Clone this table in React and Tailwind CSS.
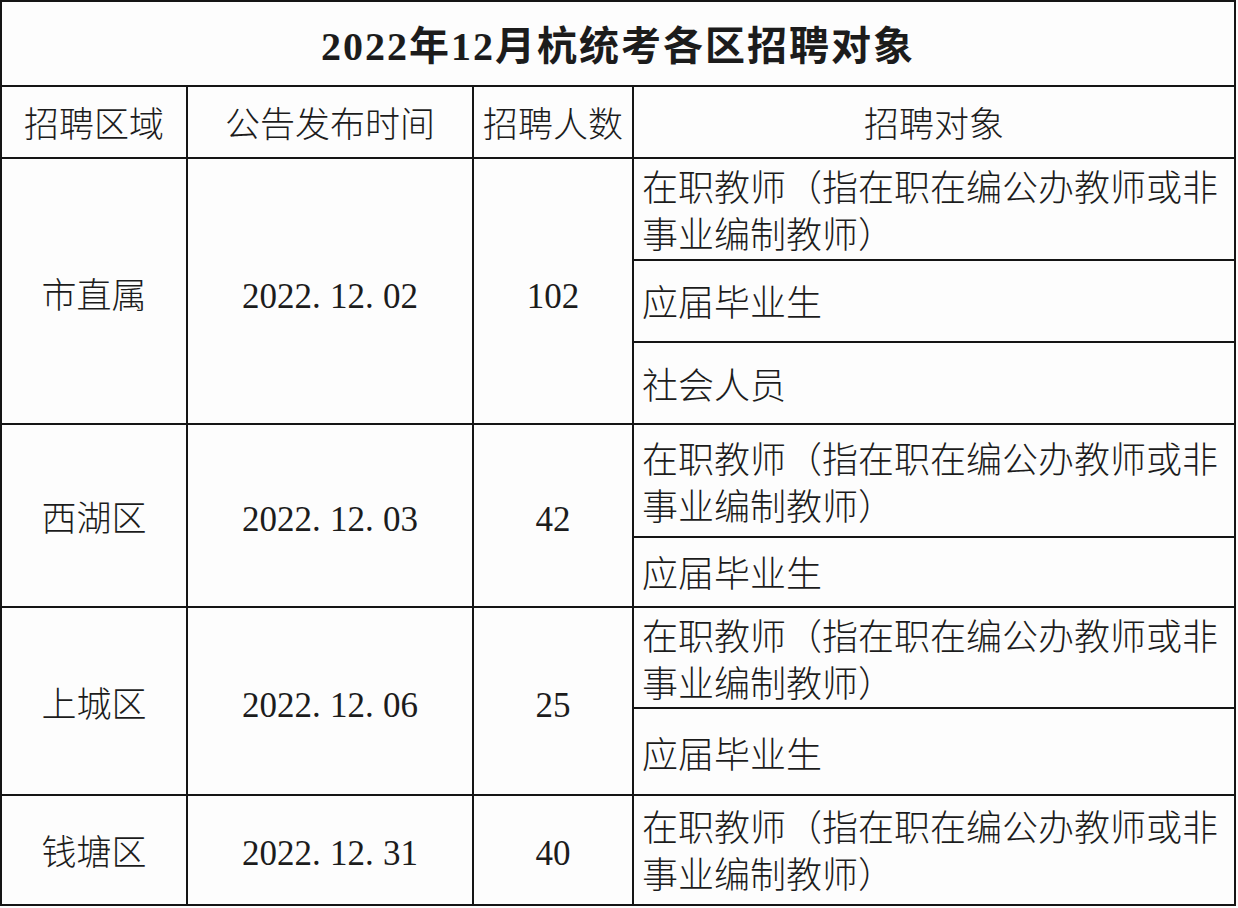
import React from "react";

const FONT = "font-['Liberation_Serif','Noto_Sans_CJK_SC',serif]";

const DateText = ({ value }) => {
  const parts = value.split(".");
  return (
    <span className="whitespace-nowrap">
      {parts.map((p, i) => (
        <React.Fragment key={i}>
          {p}
          {i < parts.length - 1 && <span className="inline-block w-[18px]">.</span>}
        </React.Fragment>
      ))}
    </span>
  );
};

const Cell = ({ className = "", children }) => (
  <div className={`bg-[#fdfdfd] flex items-center ${className}`}>{children}</div>
);

const TEACHER = (
  <>
    在职教师（指在职在编公办教师或非
    <br />
    事业编制教师）
  </>
);

const App = () => {
  return (
    <div className={`w-[1238px] h-[908px] bg-[#fdfdfd] ${FONT} text-[#1c1c1c]`}>
      <div className="grid w-[1236px] grid-cols-[184px_284px_158px_600px] grid-rows-[83px_70px_100px_80px_80px_111px_68px_99px_85px_108px] gap-[2px] bg-[#151515] p-[2px]">
        {/* title */}
        <Cell className="col-span-4 justify-center pt-[6px] text-[40px] font-bold tracking-[2px]">
          2022年12月杭统考各区招聘对象
        </Cell>

        {/* header */}
        <Cell className="justify-center pt-[8px] text-[35px] font-light">招聘区域</Cell>
        <Cell className="justify-center pt-[8px] text-[35px] font-light">公告发布时间</Cell>
        <Cell className="justify-center pt-[8px] text-[35px] font-light">招聘人数</Cell>
        <Cell className="justify-center pt-[8px] text-[35px] font-light">招聘对象</Cell>

        {/* 市直属 */}
        <Cell className="row-span-3 justify-center pt-[12px] text-[35px] font-light">市直属</Cell>
        <Cell className="row-span-3 justify-center pt-[12px] text-[35px]">
          <DateText value="2022.12.02" />
        </Cell>
        <Cell className="row-span-3 justify-center pt-[12px] text-[35px]">102</Cell>
        <Cell className="pl-[8px] pt-[8px] text-[36px] leading-[47px] font-light">{TEACHER}</Cell>
        <Cell className="pl-[8px] pt-[6px] text-[36px] font-light">应届毕业生</Cell>
        <Cell className="pl-[8px] pt-[8px] text-[36px] font-light">社会人员</Cell>

        {/* 西湖区 */}
        <Cell className="row-span-2 justify-center pt-[10px] text-[35px] font-light">西湖区</Cell>
        <Cell className="row-span-2 justify-center pt-[10px] text-[35px]">
          <DateText value="2022.12.03" />
        </Cell>
        <Cell className="row-span-2 justify-center pt-[10px] text-[35px]">42</Cell>
        <Cell className="pl-[8px] pt-[8px] text-[36px] leading-[47px] font-light">{TEACHER}</Cell>
        <Cell className="pl-[8px] pt-[6px] text-[36px] font-light">应届毕业生</Cell>

        {/* 上城区 */}
        <Cell className="row-span-2 justify-center pt-[10px] text-[35px] font-light">上城区</Cell>
        <Cell className="row-span-2 justify-center pt-[10px] text-[35px]">
          <DateText value="2022.12.06" />
        </Cell>
        <Cell className="row-span-2 justify-center pt-[10px] text-[35px]">25</Cell>
        <Cell className="pl-[8px] pt-[8px] text-[36px] leading-[47px] font-light">{TEACHER}</Cell>
        <Cell className="pl-[8px] pt-[8px] text-[36px] font-light">应届毕业生</Cell>

        {/* 钱塘区 */}
        <Cell className="justify-center pt-[8px] text-[35px] font-light">钱塘区</Cell>
        <Cell className="justify-center pt-[8px] text-[35px]">
          <DateText value="2022.12.31" />
        </Cell>
        <Cell className="justify-center pt-[8px] text-[35px]">40</Cell>
        <Cell className="pl-[8px] pt-[6px] text-[36px] leading-[47px] font-light">{TEACHER}</Cell>
      </div>
    </div>
  );
};

export default App;
